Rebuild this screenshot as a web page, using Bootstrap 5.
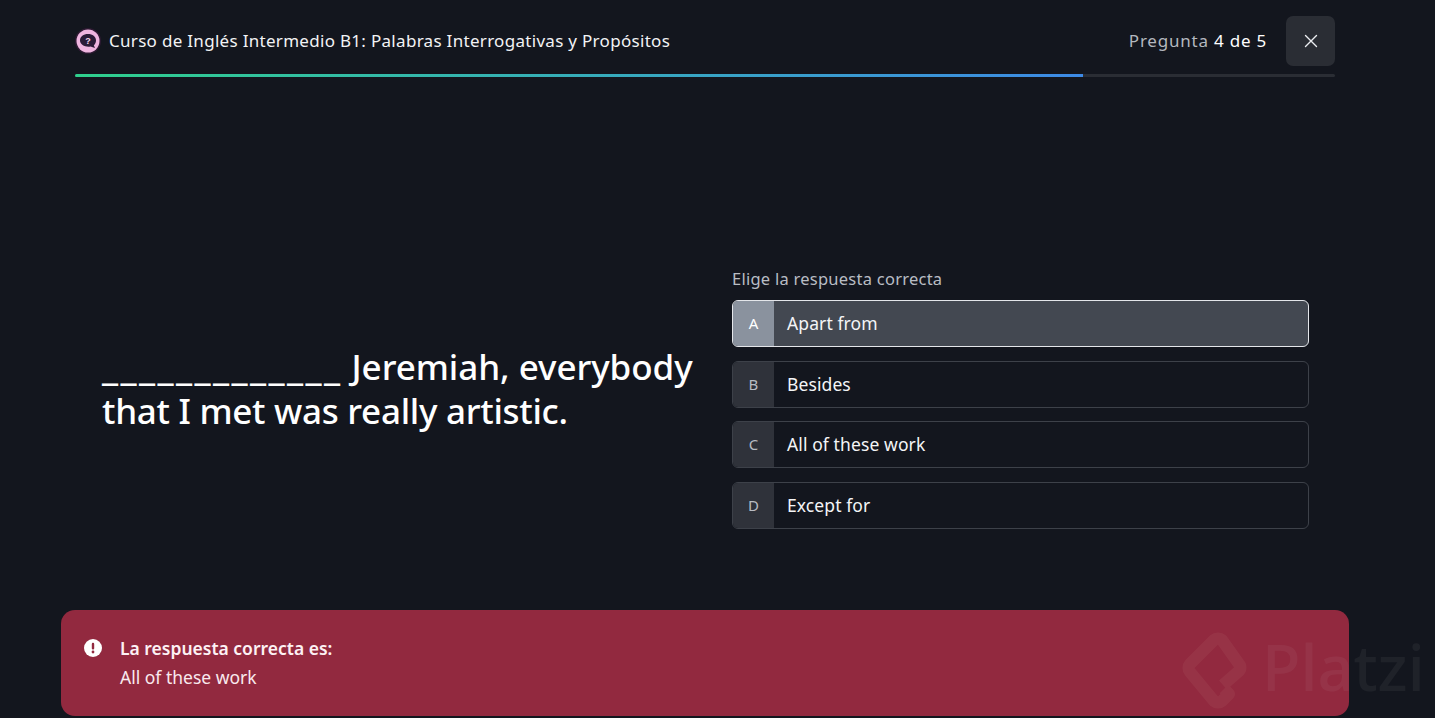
<!DOCTYPE html>
<html lang="es">
<head>
<meta charset="utf-8">
<title>Quiz</title>
<link href="https://cdn.jsdelivr.net/npm/bootstrap@5.3.0/dist/css/bootstrap.min.css" rel="stylesheet">
<style>
html,body{height:718px;overflow:hidden}
body{background:#13161e;color:#fff;font-family:"Noto Sans","Liberation Sans",sans-serif;position:relative}
.quiz-head{margin:0 100px 0 75px;height:74px;padding:16px 0 8px}
.head-icon{width:26px;height:26px;margin-right:8px}
.head-title{font-size:17px;letter-spacing:.3px;color:#f2f3f5}
.head-count{font-size:17px;color:#b4b8bf;letter-spacing:.78px;margin-right:19px}
.head-count b{font-weight:400;color:#fff}
.close-box{width:49px;height:50px;background:#2a2d34;border-radius:7px;border:0}
.bar-track{margin:0 100px 0 75px;height:3px;background:#2a2d34;border-radius:2px;overflow:hidden}
.bar-fill{height:3px;background:linear-gradient(90deg,#2fd08d,#3d8ae6)}
.quiz-main{height:533px;padding:0 126px 0 102px}
.question{width:600px;margin-right:30px;font-size:35px;font-weight:500;line-height:44px;padding-top:268px;margin-bottom:0;color:#fff;letter-spacing:-.05px}
.blank-line{font-weight:600;font-size:38px;letter-spacing:2.42px;line-height:30px}
.line-two{letter-spacing:-.28px}
.answers{width:577px;padding-top:191px}
.answers-label{font-size:16.5px;letter-spacing:.25px;color:#b9bdc4;line-height:22px;margin-bottom:10px}
.answer{height:47px;border:1px solid #3d4149;border-radius:6px;overflow:hidden;margin-bottom:13.5px;font-size:17.5px;letter-spacing:.1px;color:#f4f5f7}
.answer-key{width:41px;background:#2f323a;color:#b8bcc3;font-size:15px}
.answer-text{padding-left:13px}
.answer-on{border-color:#e4e6ea;background:#434851}
.answer-on .answer-key{background:#8a929e;color:#fff}
.feedback{position:absolute;left:61px;top:610px;width:1288px;height:106px;background:#92293f;border-radius:14px;padding:24px 23px;font-size:17.5px;color:#f9e9ee;line-height:29px}
.feedback-icon{width:18px;height:18px;margin-right:18px;margin-top:5px;flex:none}
.feedback strong{font-weight:600;display:block;color:#fdf1f4}
.mark-wrap{position:absolute;left:1178px;top:628px;pointer-events:none;opacity:.06;color:#d8d8d8}
.mark-word{font-size:63px;font-weight:500;line-height:76px;margin:-6px 0 0 12px}
</style>
</head>
<body>
<header class="quiz-head d-flex align-items-center">
  <svg class="head-icon" viewBox="0 0 26 26" role="img" aria-label="Curso"><circle cx="13" cy="13" r="13" fill="#2e1a33"/><circle cx="13" cy="13" r="11.500" fill="#efb5e0"/><path d="M5 12.500c0-4 3.500-6.500 8-6.500s8 2.500 8 6.500c0 2.200-1 3.800-2.200 4.800l1.200 2.700-4.500-1.500c-5 1-10.500-1.800-10.500-6z" fill="#2b1c38"/><text x="13" y="16" text-anchor="middle" font-size="9" font-weight="700" fill="#f5d8ee" font-family="Liberation Sans">?</text></svg>
  <span class="head-title">Curso de Inglés Intermedio B1: Palabras Interrogativas y Propósitos</span>
  <span class="head-count ms-auto">Pregunta <b>4 de 5</b></span>
  <button class="close-box d-flex align-items-center justify-content-center" aria-label="Cerrar"><svg width="14" height="14" viewBox="0 0 14 14"><path d="M1.500 1.500l11 11M12.500 1.500l-11 11" stroke="#eceef1" stroke-width="1.400" stroke-linecap="round"/></svg></button>
</header>
<div class="bar-track"><div class="bar-fill" style="width:80%"></div></div>
<main class="quiz-main d-flex">
  <h1 class="question"><span class="blank-line">_____________</span> <span>Jeremiah, everybody</span><br><span class="line-two">that I met was really artistic.</span></h1>
  <section class="answers">
    <div class="answers-label">Elige la respuesta correcta</div>
    <div class="answer answer-on d-flex align-items-stretch"><span class="answer-key d-flex align-items-center justify-content-center">A</span><span class="answer-text d-flex align-items-center">Apart from</span></div>
    <div class="answer d-flex align-items-stretch"><span class="answer-key d-flex align-items-center justify-content-center">B</span><span class="answer-text d-flex align-items-center">Besides</span></div>
    <div class="answer d-flex align-items-stretch"><span class="answer-key d-flex align-items-center justify-content-center">C</span><span class="answer-text d-flex align-items-center">All of these work</span></div>
    <div class="answer d-flex align-items-stretch"><span class="answer-key d-flex align-items-center justify-content-center">D</span><span class="answer-text d-flex align-items-center">Except for</span></div>
  </section>
</main>
<aside class="feedback d-flex align-items-start">
  <svg class="feedback-icon" viewBox="0 0 18 18" role="img" aria-label="Aviso"><circle cx="9" cy="9" r="9" fill="#fff"/><rect x="7.800" y="3.800" width="2.400" height="6.800" rx="1.100" fill="#92293f"/><circle cx="9" cy="13" r="1.400" fill="#92293f"/></svg>
  <div><strong>La respuesta correcta es:</strong>All of these work</div>
</aside>
<div class="mark-wrap d-flex align-items-center">
  <svg width="72" height="84" viewBox="0 0 72 84" aria-hidden="true"><path d="M45 57L61 43a5 5 0 0 0 0-7L44 12a6 6 0 0 0-8 0L12 36a6 6 0 0 0 0 8L36 73a6 6 0 0 0 8 0l7-7-5-5" fill="none" stroke="#f0d8b8" stroke-width="12" stroke-linejoin="round"/></svg>
  <span class="mark-word">Platzi</span>
</div>
</body>
</html>
